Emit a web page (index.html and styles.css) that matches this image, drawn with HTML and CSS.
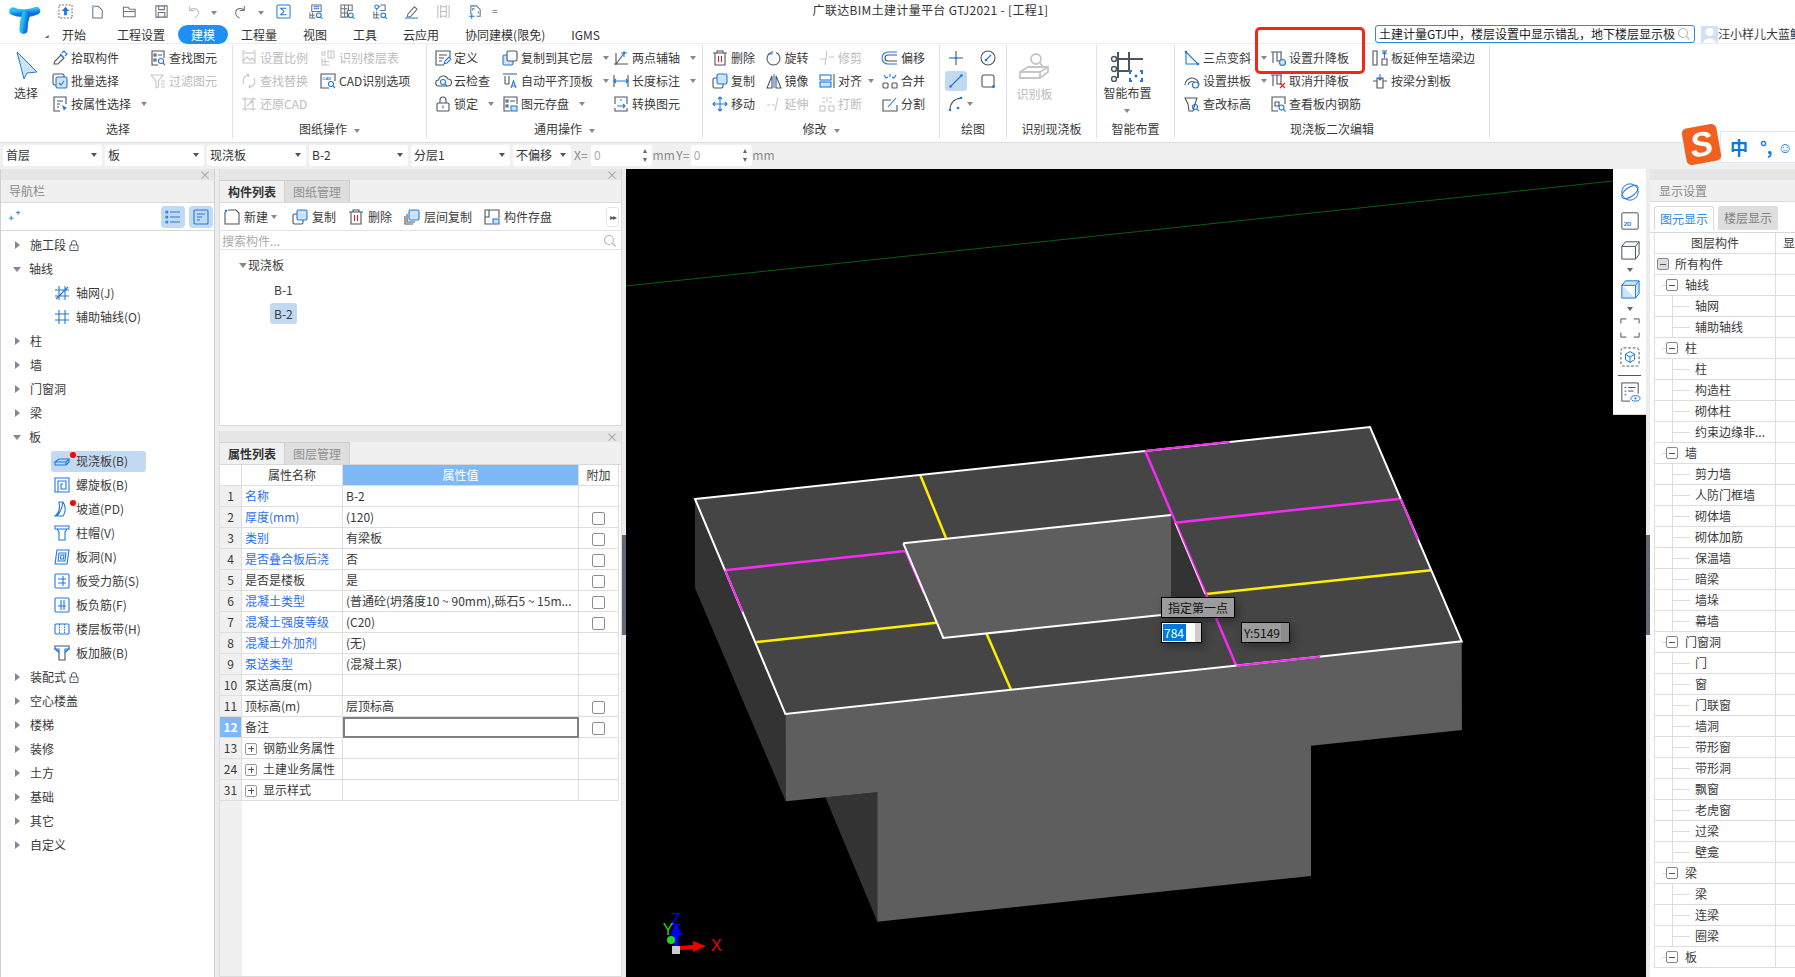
FILE: index.html
```html
<!DOCTYPE html>
<html lang="zh">
<head>
<meta charset="utf-8">
<title>广联达BIM土建计量平台 GTJ2021</title>
<link rel="stylesheet" href="styles.css">
</head>
<body>
<div class="app">

<header class="top">
  <div class="logo">
    <svg viewBox="0 0 40 34" class="logo-svg"><defs><linearGradient id="lg" x1="0" y1="0" x2="1" y2="1"><stop offset="0" stop-color="#22c3f0"/><stop offset="1" stop-color="#1668e3"/></linearGradient></defs><path d="M9.500 8C16 11 27 10 32 7.500" stroke="url(#lg)" stroke-width="7.500" stroke-linecap="round" fill="none"/><path d="M22 11C20 17 19.500 22 19.500 26" stroke="url(#lg)" stroke-width="8" stroke-linecap="round" fill="none"/><path d="M44 31l-4 3h4z" fill="#666"/></svg>
  </div>
  <div class="top-main">
    <div class="qrow">
      <svg class="qi" viewBox="0 0 16 16"><rect x="1" y="1" width="14" height="14" stroke-dasharray="2 1.5"/><path class="bfull" d="M8 3l4 4.500H9.500V12h-3V7.500H4z"/></svg>
      <svg class="qi" viewBox="0 0 16 16"><path d="M3 2.500h6l4 4V15H3z"/><circle class="bdot" cx="3.500" cy="2.500" r="1.800"/></svg>
      <svg class="qi" viewBox="0 0 16 16"><path d="M1.500 13.500V3.500h5l1.500 2h6v8z"/><path d="M1.500 8h12.500"/></svg>
      <svg class="qi" viewBox="0 0 16 16"><path d="M2 2h12v12H2z"/><path d="M5 2v4h6V2M4.500 14V9h7v5"/></svg>
      <svg class="qi qi-off" viewBox="0 0 16 16"><path d="M4 2v5h5M4 7c2-3 8-3 9 1s-2 6-4 7"/></svg><i class="car qcar"></i>
      <svg class="qi qi-next" viewBox="0 0 16 16"><path d="M12 2v5H7M12 7c-2-3-8-3-9 1s2 6 4 7"/></svg><i class="car qcar-d"></i>
      <svg class="qi qi-sum" viewBox="0 0 16 16"><rect class="b" x="1" y="1" width="14" height="14" rx="1.500"/><path class="b" d="M11 4.500H5l3.500 3.500L5 11.500h6"/></svg>
      <svg class="qi" viewBox="0 0 16 16"><path d="M4 1h10v7H4zM2 9v6h6M2 12h5M5 9v6"/><path class="b" d="M6 3h6M6 5h6"/><circle class="b" cx="11.500" cy="12" r="2.500"/><path class="b" d="M13.500 14l2 2"/></svg>
      <svg class="qi" viewBox="0 0 16 16"><path d="M1 1h12v6H8v7H1zM1 5h7M1 9.500h7M5 1v13M9 1v6"/><circle class="b" cx="11.500" cy="12" r="2.500"/><path class="b" d="M13.500 14l2 2"/></svg>
      <svg class="qi" viewBox="0 0 16 16"><path d="M9 1h5v6H9M2 8v7h6M2 11.500h6M5 8v7"/><circle class="b" cx="5" cy="3" r="2"/><path class="b" d="M5 5v2M7 3h2"/><circle class="b" cx="12" cy="12" r="2.500"/><path class="b" d="M14 14l2 2"/></svg>
      <svg class="qi" viewBox="0 0 16 16"><path d="M4 11l7-8 3 2.500-7 8H3.500z"/><path class="b" d="M1 15h14"/></svg>
      <svg class="qi qi-film" viewBox="0 0 16 16"><path d="M2 1v14M14 1v14M5 1v14M11 1v14M5 3h6M5 8h6M5 13h6"/></svg>
      <svg class="qi" viewBox="0 0 16 16"><path d="M3 11V2h6l4 4v7H9"/><path class="b" d="M1 13h6M4 10v6M7 5H5v2M11 10v-2"/></svg>
      <span class="qmenu">=</span>
      <span class="title">广联达BIM土建计量平台 GTJ2021 - [工程1]</span>
    </div>
    <div class="trow">
      <nav class="tabs">
        <span class="tab">开始</span>
        <span class="tab tab-gap">工程设置</span>
        <span class="tab tab-on">建模</span>
        <span class="tab">工程量</span>
        <span class="tab">视图</span>
        <span class="tab">工具</span>
        <span class="tab">云应用</span>
        <span class="tab">协同建模(限免)</span>
        <span class="tab">IGMS</span>
      </nav>
      <div class="search"><span class="search-t">土建计量GTJ中，楼层设置中显示错乱，地下楼层显示极</span><svg class="ic ic-gray" viewBox="0 0 16 16"><circle cx="7" cy="7" r="4.500"/><path d="M10.500 10.500l3 3"/></svg></div>
      <div class="avatar"><svg viewBox="0 0 17 17" class="av"><rect width="17" height="17" fill="#cfe2f8"/><circle cx="8.500" cy="6" r="4" fill="#fff"/><path d="M2 17c1-6 12-6 13 0z" fill="#fff"/></svg><span>汪小样儿大蓝鲸</span></div>
    </div>
  </div>
</header>

<section class="ribbon">
  <div class="rg g1">
    <div class="rb">
      <div class="lg lg-sel"><svg class="ic-lg" viewBox="0 0 24 28"><path class="bf" d="M3 1l20 20-10 1-3 6z"/></svg><span>选择</span></div>
      <div class="col c98">
        <div class="it"><svg class="ic" viewBox="0 0 16 16"><path d="M2 14l1-3 6-6 3 3-6 6z"/><path class="b" d="M8 4l4 4M10 3l2-2 3 3-2 2"/></svg><span>拾取构件</span></div>
        <div class="it"><svg class="ic" viewBox="0 0 16 16"><rect x="1" y="1" width="11" height="11" rx="1.500"/><rect class="bf" x="4" y="4" width="11" height="11" rx="1.500"/><path class="b" d="M7 10l2 2 3-4"/></svg><span>批量选择</span></div>
        <div class="it"><svg class="ic" viewBox="0 0 16 16"><path d="M8 15H2V1h12v7"/><path d="M5 5h6M5 8h3M5 11h2"/><path class="bfull" d="M10 9l5 3-2 1-1 2z"/></svg><span>按属性选择</span><i class="car"></i></div>
      </div>
      <div class="col">
        <div class="it"><svg class="ic" viewBox="0 0 16 16"><path d="M8 15H2V1h12v7"/><path d="M4 4h2v2H4zM8 5h4M4 9h2v2H4z"/><circle class="b" cx="11" cy="11" r="2.500"/><path class="b" d="M13 13l2 2"/></svg><span>查找图元</span></div>
        <div class="it off"><svg class="ic" viewBox="0 0 16 16"><path d="M1 2h12L8.500 8v6l-2.500 1V8zM11 8h4M11 11h4M11 14h4"/></svg><span>过滤图元</span></div>
      </div>
    </div>
    <div class="rt rt-sel">选择</div>
  </div>

  <div class="rg g2">
    <div class="rb">
      <div class="col c79 off">
        <div class="it"><svg class="ic" viewBox="0 0 16 16"><rect x="2" y="3" width="12" height="10"/><path d="M2 11l4-4 3 3 2-2 3 3M1 1h3M12 1h3"/></svg><span>设置比例</span></div>
        <div class="it"><svg class="ic" viewBox="0 0 16 16"><path d="M3 11A6 6 0 0 1 8 2M13 5a6 6 0 0 1-5 9M6 1l2 1-1 2M10 15l-2-1 1-2"/></svg><span>查找替换</span></div>
        <div class="it"><svg class="ic" viewBox="0 0 16 16"><path d="M1 3h14M1 13h14M4 1v14M12 1v14M6 10l5-5M9 5h2v2"/></svg><span>还原CAD</span></div>
      </div>
      <div class="col">
        <div class="it off"><svg class="ic" viewBox="0 0 16 16"><path d="M8 1h6v7H8zM11 1v7M2 8v7h7M2 11.500h7M5 8v7M2 2h3v3H2z"/></svg><span>识别楼层表</span></div>
        <div class="it"><svg class="ic" viewBox="0 0 16 16"><path d="M9 15H1V1h14v7"/><text class="cad" x="2.500" y="7">CAD</text><circle class="b" cx="11" cy="11" r="2.500"/><path class="b" d="M13 13l2 2"/></svg><span>CAD识别选项</span></div>
      </div>
    </div>
    <div class="rt">图纸操作<i class="car"></i></div>
  </div>

  <div class="rg g3">
    <div class="rb">
      <div class="col c67">
        <div class="it"><svg class="ic" viewBox="0 0 16 16"><path d="M9 15H1V1h14v6"/><path d="M4 5h8M4 8h5M4 11h3"/><path class="b" d="M9 14l1-3 4-4 2 2-4 4z"/></svg><span>定义</span></div>
        <div class="it"><svg class="ic" viewBox="0 0 16 16"><path d="M4 13a3 3 0 0 1-.5-6A5 5 0 0 1 13 6a3.500 3.500 0 0 1 0 7z"/><circle class="b" cx="8" cy="9" r="2.500"/><path class="b" d="M10 11l2 2"/></svg><span>云检查</span></div>
        <div class="it"><svg class="ic" viewBox="0 0 16 16"><path d="M5 7V4a3 3 0 0 1 6 0v3"/><rect x="2" y="7" width="12" height="8" rx="1"/><path class="bf" d="M8 9.500v3"/></svg><span>锁定</span><i class="car"></i></div>
      </div>
      <div class="col c111">
        <div class="it"><svg class="ic" viewBox="0 0 16 16"><rect class="bf" x="1" y="5" width="10" height="10" rx="1.500"/><rect x="5" y="1" width="10" height="10" rx="1.500" fill="#fff"/></svg><span>复制到其它层</span><i class="car"></i></div>
        <div class="it"><svg class="ic" viewBox="0 0 16 16"><path d="M1 1h14M3 3v8M7 3v8M3 11h4"/><path class="b" d="M9 15l2.500-7 2.500 7M10 13h3"/></svg><span>自动平齐顶板</span><i class="car"></i></div>
        <div class="it"><svg class="ic" viewBox="0 0 16 16"><path d="M8 15H2V1h13v7"/><path d="M4 4h2v2H4zM8 5h5M4 9h2v2H4z"/><rect class="bf" x="9" y="10" width="6" height="5"/></svg><span>图元存盘</span><i class="car"></i></div>
      </div>
      <div class="col">
        <div class="it"><svg class="ic" viewBox="0 0 16 16"><path d="M3 14L12 2M1 14h14M3 3v12"/><path class="b" d="M8 3h6M11 1v6"/></svg><span>两点辅轴</span><i class="car"></i></div>
        <div class="it"><svg class="ic" viewBox="0 0 16 16"><path d="M1 2v12M15 2v12"/><path class="b" d="M1 8h14M3 6l-2 2 2 2M13 6l2 2-2 2"/></svg><span>长度标注</span><i class="car"></i></div>
        <div class="it"><svg class="ic" viewBox="0 0 16 16"><path d="M2 8V1h12v7M2 12v3h12v-3"/><path class="b" d="M4 10h8M10 8l2 2-2 2M7 4h2"/></svg><span>转换图元</span></div>
      </div>
    </div>
    <div class="rt">通用操作<i class="car"></i></div>
  </div>

  <div class="rg g4">
    <div class="rb">
      <div class="col c53">
        <div class="it"><svg class="ic" viewBox="0 0 16 16"><path d="M1 3h14M5 3V1h6v2M3 3v12h10V3"/><path class="rd" d="M6.500 6v6M9.500 6v6"/></svg><span>删除</span></div>
        <div class="it"><svg class="ic" viewBox="0 0 16 16"><rect x="1" y="5" width="10" height="10" rx="1.500"/><rect class="bf" x="5" y="1" width="10" height="10" rx="1.500"/></svg><span>复制</span></div>
        <div class="it"><svg class="ic" viewBox="0 0 16 16"><path class="b" d="M8 1v14M1 8h14M6 3l2-2 2 2M6 13l2 2 2-2M3 6L1 8l2 2M13 6l2 2-2 2"/></svg><span>移动</span></div>
      </div>
      <div class="col c53">
        <div class="it"><svg class="ic" viewBox="0 0 16 16"><path d="M10 2.500a6.500 6.500 0 1 1-5 0"/><path class="b" d="M6 1v3H3"/></svg><span>旋转</span></div>
        <div class="it"><svg class="ic" viewBox="0 0 16 16"><path class="b" d="M8 1v14"/><path d="M6 3L1 15h5zM10 3l5 12h-5z"/></svg><span>镜像</span></div>
        <div class="it off"><svg class="ic" viewBox="0 0 16 16"><path d="M1 9h3M6 9h3M12 1L9 15"/></svg><span>延伸</span></div>
      </div>
      <div class="col c63">
        <div class="it off"><svg class="ic" viewBox="0 0 16 16"><path d="M1 9h6M10 7h5M8 1L6 15"/></svg><span>修剪</span></div>
        <div class="it"><svg class="ic" viewBox="0 0 16 16"><path d="M15 1v14"/><rect class="b" x="1" y="2" width="11" height="5"/><rect class="bf" x="1" y="9" width="11" height="5"/></svg><span>对齐</span><i class="car car-t"></i></div>
        <div class="it off"><svg class="ic" viewBox="0 0 16 16"><rect x="1" y="10" width="5" height="5"/><rect x="10" y="10" width="5" height="5"/><path d="M3 2h3M3 6h3M10 2h3M10 6h3M8 1v5"/></svg><span>打断</span></div>
      </div>
      <div class="col">
        <div class="it"><svg class="ic" viewBox="0 0 16 16"><path class="b" d="M15 2H6a6 6 0 0 0 0 12h9"/><path d="M15 5H6a3 3 0 0 0 0 6h9"/></svg><span>偏移</span></div>
        <div class="it"><svg class="ic" viewBox="0 0 16 16"><rect x="1" y="10" width="5" height="5" rx="1"/><rect x="10" y="10" width="5" height="5" rx="1"/><path class="b" d="M2 2l2 3 2-1M14 2l-2 3-2-1M8 1v3"/></svg><span>合并</span></div>
        <div class="it"><svg class="ic" viewBox="0 0 16 16"><path d="M15 9v6H1V4h8"/><path class="b" d="M6 11l8-9"/></svg><span>分割</span></div>
      </div>
    </div>
    <div class="rt">修改<i class="car"></i></div>
  </div>

  <div class="rg g5">
    <div class="rb">
      <div class="col c32">
        <div class="it"><svg class="ic" viewBox="0 0 16 16"><path d="M1 8h5M10 8h5M8 1v5M8 10v5"/><circle class="bfull" cx="8" cy="8" r="1.800"/></svg></div>
        <div class="it it-on"><svg class="ic" viewBox="0 0 16 16"><path class="b" d="M2 14L14 2"/><circle class="bfull" cx="2.500" cy="13.500" r="1.200"/><circle class="bfull" cx="13.500" cy="2.500" r="1.200"/></svg></div>
        <div class="it"><svg class="ic" viewBox="0 0 16 16"><path d="M2 14C2 7 6 3 13 2"/><circle class="bfull" cx="2" cy="14" r="1.300"/><circle class="bfull" cx="13" cy="2" r="1.300"/><circle class="bfull" cx="10" cy="12" r="1.300"/></svg><i class="car car-n"></i></div>
      </div>
      <div class="col">
        <div class="it"><svg class="ic" viewBox="0 0 16 16"><circle cx="8" cy="8" r="7"/><path class="b" d="M6 10l5-5"/><circle class="bfull" cx="6" cy="10" r="1.300"/></svg></div>
        <div class="it"><svg class="ic" viewBox="0 0 16 16"><rect x="2" y="2" width="12" height="12" rx="1.500"/><circle class="bfull" cx="13.500" cy="13.500" r="1.500"/></svg></div>
      </div>
    </div>
    <div class="rt">绘图</div>
  </div>

  <div class="rg g6">
    <div class="rb rb-id">
      <div class="lg off lg-id"><svg class="ic-lg2" viewBox="0 0 30 30"><circle cx="17" cy="7" r="5"/><path d="M21 11l3 4"/><path d="M1 20l8-5h20v5l-8 6H1zM1 20h20v6M21 20l8-5"/></svg><span>识别板</span></div>
    </div>
    <div class="rt">识别现浇板</div>
  </div>

  <div class="rg g7">
    <div class="rb rb-ai">
      <div class="lg lg-ai"><svg class="ic-lg3" viewBox="0 0 32 32"><path class="thick" d="M7 2v26M18 2v20M2 9h30M7 21h10"/><circle class="dot" cx="3" cy="9" r="2.500"/><circle class="dot" cx="3" cy="19" r="2.500"/><circle class="dot" cx="3" cy="29" r="2.500"/><path class="bthick" d="M21 21h-2v3M29 21h2v3M21 31h-2v-3M29 31h2v-3"/><circle class="bfull" cx="25" cy="26" r="1.500"/></svg><span>智能布置</span><i class="car car-ai"></i></div>
    </div>
    <div class="rt">智能布置</div>
  </div>

  <div class="rg g8">
    <div class="rb">
      <div class="col c86">
        <div class="it"><svg class="ic" viewBox="0 0 16 16"><path class="b" d="M2 2v12h12M2 2l12 12"/><circle class="bfull" cx="2" cy="2" r="1.300"/><circle class="bfull" cx="14" cy="14" r="1.300"/></svg><span>三点变斜</span><i class="car"></i></div>
        <div class="it"><svg class="ic" viewBox="0 0 16 16"><path d="M1 12a7 7 0 0 1 14 0M4 12a4 4 0 0 1 7-2"/><circle class="b" cx="11.500" cy="12" r="3"/></svg><span>设置拱板</span><i class="car"></i></div>
        <div class="it"><svg class="ic" viewBox="0 0 16 16"><path d="M1 2h12l-2 6-2 7H5L4 8z"/><circle class="b" cx="11" cy="11" r="2.500"/><path class="b" d="M13 13l2 2"/></svg><span>查改标高</span></div>
      </div>
      <div class="col c102">
        <div class="it"><svg class="ic" viewBox="0 0 16 16"><path d="M1 2h11M3 2v11M7 2v9h4V2"/><circle class="bf" cx="12.500" cy="12.500" r="3"/></svg><span>设置升降板</span></div>
        <div class="it"><svg class="ic" viewBox="0 0 16 16"><path d="M1 2h11M3 2v11M7 2v9h4V2"/><path class="rd" d="M10 10l5 5M15 10l-5 5"/></svg><span>取消升降板</span></div>
        <div class="it"><svg class="ic" viewBox="0 0 16 16"><path d="M8 15H2V1h13v7"/><path d="M5 6h4v4H5z"/><circle class="b" cx="11.500" cy="11.500" r="2.500"/><path class="b" d="M13.500 13.500l2 2"/></svg><span>查看板内钢筋</span></div>
      </div>
      <div class="col">
        <div class="it"><svg class="ic" viewBox="0 0 16 16"><path d="M1 1h4v14H1zM10 1h5M10 15h5V9h-5z"/><path class="b" d="M12.500 8V2M10.500 4l2-2 2 2"/></svg><span>板延伸至墙梁边</span></div>
        <div class="it"><svg class="ic" viewBox="0 0 16 16"><path d="M1 8h4M11 8h4M5 5h6v10H5z"/><path class="b" d="M8 1v6M6 5l2 2 2-2" /></svg><span>按梁分割板</span></div>
      </div>
    </div>
    <div class="rt">现浇板二次编辑</div>
  </div>
</section>

<section class="bar">
  <div class="combo"><span>首层</span><i class="car"></i></div>
  <div class="combo"><span>板</span><i class="car"></i></div>
  <div class="combo"><span>现浇板</span><i class="car"></i></div>
  <div class="combo"><span>B-2</span><i class="car"></i></div>
  <div class="combo"><span>分层1</span><i class="car"></i></div>
  <div class="combo combo-s"><span>不偏移</span><i class="car"></i></div>
  <span class="lbl">X=</span>
  <div class="num"><span>0</span><em class="spin"></em></div>
  <span class="lbl lbl-mm">mm</span>
  <span class="lbl lbl-y">Y=</span>
  <div class="num"><span>0</span><em class="spin"></em></div>
  <span class="lbl lbl-mm">mm</span>
</section>

<main class="main">
  <aside class="nav">
    <div class="band"><span class="x">×</span></div>
    <div class="phead">导航栏</div>
    <div class="ntool">
      <svg class="ic ic-sm" viewBox="0 0 16 16"><path class="b" d="M1 10h6M4 7v6M10 3h5M12.500 1v5"/></svg>
      <span class="ntool-btn ml-auto"><svg class="ic" viewBox="0 0 16 16"><path class="b" d="M5 3h10M5 8h10M5 13h10"/><circle class="b" cx="1.800" cy="3" r="1"/><circle class="b" cx="1.800" cy="8" r="1"/><circle class="b" cx="1.800" cy="13" r="1"/></svg></span>
      <span class="ntool-btn"><svg class="ic" viewBox="0 0 16 16"><rect class="b" x="1" y="1" width="14" height="14" rx="1"/><path class="b" d="M4 5h8M4 8h5M4 11h3"/></svg></span>
    </div>
    <div class="tree">
      <div class="nr"><i class="ar-r"></i>施工段<svg class="lock" viewBox="0 0 10 11"><path d="M2.500 5V3a2.500 2.500 0 0 1 5 0v2M1 5h8v5.500H1zM5 7v1.500"/></svg></div>
      <div class="nr"><i class="ar-d"></i>轴线</div>
      <div class="nc"><span class="ncin"><svg class="ic" viewBox="0 0 16 16"><path class="b" d="M1 5h14M1 11h14M5 1v14M11 1v14M2 14L14 2"/></svg>轴网(J)</span></div>
      <div class="nc"><span class="ncin"><svg class="ic" viewBox="0 0 16 16"><path class="b" d="M1 5h14M1 11h14M5 1v14M11 1v14"/></svg>辅助轴线(O)</span></div>
      <div class="nr"><i class="ar-r"></i>柱</div>
      <div class="nr"><i class="ar-r"></i>墙</div>
      <div class="nr"><i class="ar-r"></i>门窗洞</div>
      <div class="nr"><i class="ar-r"></i>梁</div>
      <div class="nr"><i class="ar-d"></i>板</div>
      <div class="nc"><span class="ncin nc-on"><svg class="ic" viewBox="0 0 16 16"><path class="b" d="M1 9l4-3h10l-3 3H1zM1 9v3h11V9M12 12l3-3V6"/></svg>现浇板(B)<i class="dot-r"></i></span></div>
      <div class="nc"><span class="ncin"><svg class="ic" viewBox="0 0 16 16"><path class="b" d="M1 1h14v14H1zM4 15V4h8v8H7V7h2"/></svg>螺旋板(B)</span></div>
      <div class="nc"><span class="ncin"><svg class="ic" viewBox="0 0 16 16"><path class="b" d="M5 1h4c3 4 3 10 0 14H1c4-3 5-9 4-14zM9 1c-1 6-3 11-6 14"/></svg>坡道(PD)<i class="dot-r"></i></span></div>
      <div class="nc"><span class="ncin"><svg class="ic" viewBox="0 0 16 16"><path class="b" d="M1 1h14v3H1zM3 4l2 3v8h6V7l2-3"/></svg>柱帽(V)</span></div>
      <div class="nc"><span class="ncin"><svg class="ic" viewBox="0 0 16 16"><path class="b" d="M3 1h12l-2 14H1zM5 4h7l-1 8H4zM7 6h3l-.5 4H6.500z"/></svg>板洞(N)</span></div>
      <div class="nc"><span class="ncin"><svg class="ic" viewBox="0 0 16 16"><rect class="b" x="1" y="1" width="14" height="14" rx="1"/><path class="b" d="M9 3v10M4 6h8M4 10h8"/></svg>板受力筋(S)</span></div>
      <div class="nc"><span class="ncin"><svg class="ic" viewBox="0 0 16 16"><rect class="b" x="1" y="1" width="14" height="14" rx="1"/><path class="b" d="M7 3v10M10 3v10M4 9h8"/></svg>板负筋(F)</span></div>
      <div class="nc"><span class="ncin"><svg class="ic" viewBox="0 0 16 16"><rect class="b" x="1" y="3" width="14" height="10" rx="1"/><path class="b" d="M5.500 3v10M10.500 3v10" stroke-dasharray="1.500 1"/></svg>楼层板带(H)</span></div>
      <div class="nc"><span class="ncin"><svg class="ic" viewBox="0 0 16 16"><path d="M1 1h14v3l-4 3v8H5V7L1 4z"/><path class="bf" d="M1 4l4 3V4zM15 4l-4 3V4z"/></svg>板加腋(B)</span></div>
      <div class="nr"><i class="ar-r"></i>装配式<svg class="lock" viewBox="0 0 10 11"><path d="M2.500 5V3a2.500 2.500 0 0 1 5 0v2M1 5h8v5.500H1zM5 7v1.500"/></svg></div>
      <div class="nr"><i class="ar-r"></i>空心楼盖</div>
      <div class="nr"><i class="ar-r"></i>楼梯</div>
      <div class="nr"><i class="ar-r"></i>装修</div>
      <div class="nr"><i class="ar-r"></i>土方</div>
      <div class="nr"><i class="ar-r"></i>基础</div>
      <div class="nr"><i class="ar-r"></i>其它</div>
      <div class="nr"><i class="ar-r"></i>自定义</div>
    </div>
  </aside>
  <div class="sp"></div>

  <section class="mid">
    <div class="panel p1">
      <div class="band"><span class="x">×</span></div>
      <div class="ptabs"><span class="ptab ptab-on">构件列表</span><span class="ptab">图纸管理</span></div>
      <div class="ctool">
        <span class="ct"><svg class="ic" viewBox="0 0 16 16"><path d="M1 3v12h14V4l-3-3H4"/><path class="b" d="M1 1l2 2M3 1L1 3" /></svg>新建<i class="car"></i></span>
        <span class="ct"><svg class="ic" viewBox="0 0 16 16"><rect x="1" y="5" width="10" height="10" rx="1.500"/><rect class="bf" x="5" y="1" width="10" height="10" rx="1.500"/></svg>复制</span>
        <span class="ct"><svg class="ic" viewBox="0 0 16 16"><path d="M1 3h14M5 3V1h6v2M3 3v12h10V3"/><path class="rd" d="M6.500 6v6M9.500 6v6"/></svg>删除</span>
        <span class="ct"><svg class="ic" viewBox="0 0 16 16"><path d="M1 7v8h8M3 5v8h8"/><rect class="bf" x="5" y="1" width="10" height="10" rx="1.500"/></svg>层间复制</span>
        <span class="ct"><svg class="ic" viewBox="0 0 16 16"><path d="M8 15H1V1h14v8M1 8h4V1"/><rect class="bf" x="9" y="10" width="6" height="5"/></svg>构件存盘</span>
        <span class="more">▸▸</span>
      </div>
      <div class="csearch"><span>搜索构件...</span><svg class="ic ic-gray" viewBox="0 0 16 16"><circle cx="7" cy="7" r="4.500"/><path d="M10.500 10.500l3 3"/></svg></div>
      <div class="ctree">
        <div class="ctr ctr0"><i class="ar-d"></i>现浇板</div>
        <div class="ctr ctr1"><span class="ctname">B-1</span></div>
        <div class="ctr ctr1"><span class="ctname ctname-on">B-2</span></div>
      </div>
    </div>
    <div class="panel p2">
      <div class="band"><span class="x">×</span></div>
      <div class="ptabs ptabs2"><span class="ptab ptab-on">属性列表</span><span class="ptab">图层管理</span></div>
      <div class="gridwrap">
        <table class="props">
          <colgroup><col class="c-n"><col class="c-k"><col class="c-v"><col class="c-a"></colgroup>
          <thead><tr><th class="h-n"></th><th>属性名称</th><th class="h-on">属性值</th><th>附加</th></tr></thead>
          <tbody>
            <tr><td class="n">1</td><td class="bl">名称</td><td>B-2</td><td></td></tr>
            <tr><td class="n">2</td><td class="bl">厚度(mm)</td><td>(120)</td><td><i class="cb"></i></td></tr>
            <tr><td class="n">3</td><td class="bl">类别</td><td>有梁板</td><td><i class="cb"></i></td></tr>
            <tr><td class="n">4</td><td class="bl">是否叠合板后浇</td><td>否</td><td><i class="cb"></i></td></tr>
            <tr><td class="n">5</td><td>是否是楼板</td><td>是</td><td><i class="cb"></i></td></tr>
            <tr><td class="n">6</td><td class="bl">混凝土类型</td><td>(普通砼(坍落度10 ~ 90mm),砾石5 ~ 15m...</td><td><i class="cb"></i></td></tr>
            <tr><td class="n">7</td><td class="bl">混凝土强度等级</td><td>(C20)</td><td><i class="cb"></i></td></tr>
            <tr><td class="n">8</td><td class="bl">混凝土外加剂</td><td>(无)</td><td></td></tr>
            <tr><td class="n">9</td><td class="bl">泵送类型</td><td>(混凝土泵)</td><td></td></tr>
            <tr><td class="n">10</td><td>泵送高度(m)</td><td></td><td></td></tr>
            <tr><td class="n">11</td><td>顶标高(m)</td><td>层顶标高</td><td><i class="cb"></i></td></tr>
            <tr><td class="n n-on">12</td><td>备注</td><td class="edit"></td><td><i class="cb"></i></td></tr>
            <tr><td class="n">13</td><td class="exp"><i class="pl"></i>钢筋业务属性</td><td></td><td></td></tr>
            <tr><td class="n">24</td><td class="exp"><i class="pl"></i>土建业务属性</td><td></td><td></td></tr>
            <tr><td class="n">31</td><td class="exp"><i class="pl"></i>显示样式</td><td></td><td></td></tr>
          </tbody>
        </table>
        <div class="gutter"></div>
      </div>
    </div>
  </section>
  <div class="sp"><div class="thumb"></div></div>

  <section class="view">
    <svg class="scene" viewBox="626 169 1020 808">
      <line x1="626" y1="286" x2="1613" y2="181" stroke="#0b5d12" stroke-width="1"/>
      <polygon points="695,499 785.400,714 785.700,801.300 695,588" fill="#333"/>
      <polygon points="825.400,797.300 877.300,792.300 877.300,921.700" fill="#333"/>
      <polygon points="785.400,714 1461.700,641.300 1461.900,730 1311,745.700 1311,876 877.300,921.700 877.300,792.300 785.700,801.300" fill="#5e5e5e"/>
      <polygon points="695,499 1370,427 1461.700,641.300 785.400,714" fill="#454545"/>
      <g stroke="#ffee00" stroke-width="2.500" fill="none">
        <line x1="920.300" y1="475.300" x2="946" y2="538"/>
        <line x1="986.700" y1="634" x2="1010.800" y2="689.300"/>
        <line x1="756.300" y1="642" x2="936.200" y2="622.700"/>
        <line x1="1206.100" y1="594" x2="1431" y2="570.300"/>
      </g>
      <g stroke="#f62bf0" stroke-width="2.500" fill="none">
        <line x1="725" y1="570.300" x2="905.500" y2="551"/>
        <line x1="905.500" y1="551" x2="924.100" y2="593.300"/>
        <line x1="1145.200" y1="451" x2="1236.300" y2="665.700"/>
        <line x1="1174.800" y1="522.700" x2="1400.800" y2="498.700"/>
      </g>
      <polygon points="1171,515 1210.500,610 1171,614" fill="#333"/>
      <polygon points="903.300,543.300 1171,515 1171,614 943.300,638" fill="#5e5e5e"/>
      <g stroke="#fff" stroke-width="2" fill="none">
        <polyline points="903.300,543.300 1171,515"/>
        <polyline points="903.300,543.300 943.300,638 1171,614"/>
      </g>
      <line x1="1175" y1="523" x2="1205" y2="594" stroke="#fff" stroke-width="1"/>
      <polygon points="695,499 1370,427 1461.700,641.300 785.400,714" fill="none" stroke="#fff" stroke-width="2"/>
      <g stroke="#f62bf0" stroke-width="2" fill="none">
        <line x1="725" y1="570.300" x2="742.600" y2="611.700"/>
        <line x1="1400.800" y1="498.700" x2="1417.800" y2="540"/>
        <line x1="1145" y1="451" x2="1229.700" y2="441.700"/>
        <line x1="1236.300" y1="665.700" x2="1320" y2="656.700"/>
      </g>
      <line x1="676" y1="946" x2="676" y2="930" stroke="#0000ff" stroke-width="5"/>
      <polygon points="676,923 670,935 682,935" fill="#0000ff"/>
      <circle cx="671" cy="940" r="4" fill="#1fd51f"/>
      <rect x="672" y="946" width="8" height="8" fill="#ccc"/>
      <line x1="680" y1="948" x2="695" y2="947" stroke="#ee0000" stroke-width="4"/>
      <polygon points="706,946 693,941 693,952" fill="#ee0000"/>
      <text x="676" y="925" class="ax ax-z">Z</text>
      <text x="668" y="935" class="ax ax-y">Y</text>
      <text x="711" y="951" class="ax ax-x">X</text>
    </svg>
    <div class="tip tip-main">指定第一点</div>
    <div class="tip tip-x"><span class="sel">784</span></div>
    <div class="tip tip-y">Y:5149</div>
    <div class="vbar">
      <svg class="vi" viewBox="0 0 22 22"><ellipse class="b" cx="11" cy="11" rx="9" ry="9"/><ellipse class="b" cx="11" cy="11" rx="10.500" ry="5" transform="rotate(-35 11 11)"/></svg>
      <svg class="vi" viewBox="0 0 22 22"><rect x="2" y="2" width="18" height="18" rx="1"/><text class="t2d" x="4" y="17">2D</text></svg>
      <svg class="vi" viewBox="0 0 22 22"><path d="M2 7v14h15V7zM2 7l4-5h15v14l-4 5M17 7l4-5"/></svg>
      <i class="vcar"></i>
      <svg class="vi" viewBox="0 0 22 22"><path class="bf" d="M2 7v14h15V7zM2 7l4-5h15v14l-4 5M17 7l4-5"/></svg>
      <i class="vcar"></i>
      <svg class="vi" viewBox="0 0 22 22"><path d="M1 6V1h6M15 1h6v5M21 16v5h-6M7 21H1v-5"/></svg>
      <svg class="vi" viewBox="0 0 22 22"><rect x="1" y="1" width="20" height="20" rx="3" stroke-dasharray="3 2"/><path class="b" d="M11 5l5 3v6l-5 3-5-3V8zM6 8l5 3 5-3M11 11v6"/></svg>
      <div class="vsep"></div>
      <svg class="vi" viewBox="0 0 22 22"><path d="M11 21H2V1h18v12"/><path d="M5 6h2M9 6h8M5 10h2M9 10h6M5 14h2"/><ellipse class="b" cx="17" cy="18" rx="5" ry="3"/><circle class="bfull" cx="17" cy="18" r="1.200"/></svg>
    </div>
  </section>
  <div class="sp"><div class="thumb"></div></div>

  <aside class="right">
    <div class="band"></div>
    <div class="phead">显示设置</div>
    <div class="rtabs"><span class="rtab rtab-on">图元显示</span><span class="rtab">楼层显示</span></div>
    <div class="rtable">
      <div class="rr rh"><div class="rc1">图层构件</div><div class="rc2">显示</div></div>
      <div class="rr l0"><div class="rc1"><i class="mn mn0"></i>所有构件</div><div class="rc2"></div></div>
      <div class="rr l1"><div class="rc1"><i class="mn"></i>轴线</div><div class="rc2"></div></div>
      <div class="rr l2"><div class="rc1">轴网</div><div class="rc2"></div></div>
      <div class="rr l2"><div class="rc1">辅助轴线</div><div class="rc2"></div></div>
      <div class="rr l1"><div class="rc1"><i class="mn"></i>柱</div><div class="rc2"></div></div>
      <div class="rr l2"><div class="rc1">柱</div><div class="rc2"></div></div>
      <div class="rr l2"><div class="rc1">构造柱</div><div class="rc2"></div></div>
      <div class="rr l2"><div class="rc1">砌体柱</div><div class="rc2"></div></div>
      <div class="rr l2"><div class="rc1">约束边缘非...</div><div class="rc2"></div></div>
      <div class="rr l1"><div class="rc1"><i class="mn"></i>墙</div><div class="rc2"></div></div>
      <div class="rr l2"><div class="rc1">剪力墙</div><div class="rc2"></div></div>
      <div class="rr l2"><div class="rc1">人防门框墙</div><div class="rc2"></div></div>
      <div class="rr l2"><div class="rc1">砌体墙</div><div class="rc2"></div></div>
      <div class="rr l2"><div class="rc1">砌体加筋</div><div class="rc2"></div></div>
      <div class="rr l2"><div class="rc1">保温墙</div><div class="rc2"></div></div>
      <div class="rr l2"><div class="rc1">暗梁</div><div class="rc2"></div></div>
      <div class="rr l2"><div class="rc1">墙垛</div><div class="rc2"></div></div>
      <div class="rr l2"><div class="rc1">幕墙</div><div class="rc2"></div></div>
      <div class="rr l1"><div class="rc1"><i class="mn"></i>门窗洞</div><div class="rc2"></div></div>
      <div class="rr l2"><div class="rc1">门</div><div class="rc2"></div></div>
      <div class="rr l2"><div class="rc1">窗</div><div class="rc2"></div></div>
      <div class="rr l2"><div class="rc1">门联窗</div><div class="rc2"></div></div>
      <div class="rr l2"><div class="rc1">墙洞</div><div class="rc2"></div></div>
      <div class="rr l2"><div class="rc1">带形窗</div><div class="rc2"></div></div>
      <div class="rr l2"><div class="rc1">带形洞</div><div class="rc2"></div></div>
      <div class="rr l2"><div class="rc1">飘窗</div><div class="rc2"></div></div>
      <div class="rr l2"><div class="rc1">老虎窗</div><div class="rc2"></div></div>
      <div class="rr l2"><div class="rc1">过梁</div><div class="rc2"></div></div>
      <div class="rr l2"><div class="rc1">壁龛</div><div class="rc2"></div></div>
      <div class="rr l1"><div class="rc1"><i class="mn"></i>梁</div><div class="rc2"></div></div>
      <div class="rr l2"><div class="rc1">梁</div><div class="rc2"></div></div>
      <div class="rr l2"><div class="rc1">连梁</div><div class="rc2"></div></div>
      <div class="rr l2"><div class="rc1">圈梁</div><div class="rc2"></div></div>
      <div class="rr l1"><div class="rc1"><i class="mn"></i>板</div><div class="rc2"></div></div>
    </div>
  </aside>
</main>

<div class="redbox"></div>
<div class="ime"><span class="ime-s">S</span><span class="ime-zh">中</span><span class="ime-p">°,</span><span class="ime-c">☺</span></div>
</div>
</body>
</html>
```
FILE: styles.css
```css
* { box-sizing: border-box; }
html, body { margin: 0; padding: 0; }
body { width: 1795px; height: 977px; overflow: hidden; background: #f0f0f0; color: #3a3a3a; font: 12px/16px "Noto Sans CJK SC", "Noto Sans", sans-serif; }
i, em { font-style: normal; }
.app { position: relative; width: 1795px; height: 977px; display: flex; flex-direction: column; }

/* top */
.top { height: 44px; background: #fff; display: flex; flex: none; border-bottom: 1px solid #ececec; }
.logo { width: 49px; flex: none; padding: 3px 0 0 3px; }
.logo-svg { width: 42px; height: 35px; overflow: visible; display: block; }
.top-main { flex: 1; display: flex; flex-direction: column; min-width: 0; }
.qrow { height: 25px; display: flex; align-items: center; padding-left: 9px; }
.qi { width: 15px; height: 15px; margin-right: 17px; fill: none; stroke: #68717c; stroke-width: 1.100; flex: none; margin-top: -3px; overflow: visible; }
.qi-off { stroke: #bdbdbd; margin-right: 3px; }
.qi-next { margin-left: 0; margin-right: 3px; }
.qi-sum { margin-left: 12px; }
.qi-film { stroke: #bdbdbd; }
.qcar { margin: 0 16px 0 0; border-top-color: #c4c4c4; }
.qcar-d { margin: 0; border-top-color: #555; }
.qmenu { color: #777; margin-top: -4px; margin-left: -8px; font-size: 10px; }
.title { margin-left: 315px; white-space: nowrap; color: #333; margin-top: -6px; letter-spacing: .33px; }
.trow { height: 18px; display: flex; align-items: center; }
.tabs { display: flex; flex: none; width: 1326px; }
.tab { padding: 0 13px; height: 19px; line-height: 19px; white-space: nowrap; color: #333; }
.tab-gap { margin-left: 5px; }
.tab-on { background: #1e90f5; color: #fff; border-radius: 10px; }
.search { width: 320px; height: 18px; border: 1px solid #2b8be6; border-radius: 3px; display: flex; align-items: center; justify-content: space-between; padding: 0 2px 0 3px; flex: none; overflow: hidden; }
.search-t { white-space: nowrap; overflow: hidden; width: 297px; color: #222; }
.avatar { display: flex; align-items: center; margin-left: 6px; white-space: nowrap; flex: none; }
.av { width: 17px; height: 17px; flex: none; }

/* shared icon */
.ic { width: 16px; height: 16px; flex: none; fill: none; stroke: #4a5561; stroke-width: 1.100; overflow: visible; }
.ic-gray { stroke: #b5b5b5; }
.ic-sm { width: 13px; height: 13px; }
.b { stroke: #1f78e0; fill: none; }
.bf { stroke: #1f78e0; fill: #cfe3f8; }
.bfull { fill: #1f78e0; stroke: none; }
.bdot { fill: #9ac6ef; stroke: none; }
.rd { stroke: #e02020; fill: none; }
.cad { font: 700 4px "Liberation Sans", sans-serif; fill: #1f78e0; stroke: none; }
.off { color: #bcbcbc; }
.off .ic, .off .ic-lg2 { stroke: #c6c6c6; }
.car { display: inline-block; width: 0; height: 0; border-left: 3px solid transparent; border-right: 3px solid transparent; border-top: 4px solid #888; margin-left: 7px; vertical-align: middle; flex: none; }
.car-n { margin-left: 0; }
.car-t { margin-left: 3px; }

/* ribbon */
.ribbon { height: 99px; flex: none; background: #fff; display: flex; border-bottom: 1px solid #dcdcdc; padding-top: 1px; }
.rg { height: 93px; border-right: 1px solid #e0e0e0; display: flex; flex-direction: column; flex: none; }
.g1 { width: 233px; }
.g2 { width: 194px; }
.g3 { width: 276px; }
.g4 { width: 237px; }
.g5 { width: 67px; }
.g6 { width: 90px; }
.g7 { width: 78px; }
.g8 { width: 315px; }
.rb { height: 74px; display: flex; padding-top: 1.500px; flex: none; }
.rb-id { justify-content: center; padding-right: 34px; }
.rb-ai { justify-content: center; padding-right: 16px; }
.g2 .rb { padding-left: 8px; }
.g3 .rb { padding-left: 8px; }
.g4 .rb { padding-left: 9px; }
.g5 .rb { padding-left: 8px; }
.g8 .rb { padding-left: 9px; }
.rt { height: 19px; line-height: 19px; text-align: center; white-space: nowrap; color: #3a3a3a; }
.rt-sel { padding-left: 4px; }
.col { display: flex; flex-direction: column; flex: none; }
.c32 { width: 32px; }
.c53 { width: 53.500px; }
.c63 { width: 63px; }
.c67 { width: 67px; }
.c79 { width: 79px; }
.c86 { width: 86px; }
.c98 { width: 98px; }
.c102 { width: 102px; }
.c111 { width: 111px; }
.it { height: 23px; display: flex; align-items: center; gap: 3px; white-space: nowrap; }
.it-on { width: 22px; margin-left: -3px; padding-left: 3px; height: 20px; margin-top: 1.500px; margin-bottom: 1.500px; background: #c2d9f2; border-radius: 3px; }
.lg { display: flex; flex-direction: column; align-items: center; white-space: nowrap; }
.lg-sel { width: 52px; padding-top: 4px; gap: 6px; }
.ic-lg { width: 24px; height: 28px; overflow: visible; }
.ic-lg2 { width: 30px; height: 30px; fill: none; stroke-width: 1.800; }
.lg-id { padding-top: 5px; gap: 4px; }
.lg-ai { padding-top: 3px; gap: 3px; }
.ic-lg3 { width: 32px; height: 32px; fill: none; }
.thick { stroke: #4a5561; stroke-width: 2; }
.bthick { stroke: #1f78e0; stroke-width: 2; fill: none; }
.dot { stroke: #4a5561; stroke-width: 1.500; fill: #fff; }
.car-ai { margin: 5px 0 0 0; }

/* option bar */
.bar { height: 26px; flex: none; display: flex; align-items: center; padding: 0 0 2px 3px; gap: 3.500px; background: #f0f0f0; color: #333; }
.combo { width: 98.500px; height: 21px; background: #fff; border-radius: 3px; display: flex; align-items: center; justify-content: space-between; padding: 0 5px 0 3px; flex: none; }
.combo-s { width: 57.500px; }
.combo .car { margin-left: 0; border-top-color: #555; }
.lbl { color: #8a8a8a; flex: none; }
.lbl-mm { margin-left: -3px; }
.lbl-y { margin-left: -2px; margin-right: -2px; }
.num { width: 61px; height: 21px; background: #fff; border-radius: 3px; padding-left: 3px; color: #aaa; display: flex; align-items: center; justify-content: space-between; padding-right: 4px; }
.spin { width: 5px; height: 13px; display: flex; flex-direction: column; justify-content: space-between; }
.spin::before { content: ""; width: 0; height: 0; border-left: 2.500px solid transparent; border-right: 2.500px solid transparent; border-bottom: 4px solid #666; }
.spin::after { content: ""; width: 0; height: 0; border-left: 2.500px solid transparent; border-right: 2.500px solid transparent; border-top: 4px solid #666; }

/* main */
.main { flex: 1; display: flex; min-height: 0; }
.sp { width: 4px; flex: none; background: #ececec; padding-top: 366px; }
.thumb { height: 100px; background: #5f6a76; }
.band { height: 11px; background: #e6e6e6; position: relative; flex: none; }
.x { display: block; text-align: right; padding-right: 3px; line-height: 11px; font-size: 12px; color: #a4a4a4; }

/* nav */
.nav { width: 215px; flex: none; display: flex; flex-direction: column; background: #fff; border-left: 1px solid #d0d0d0; border-right: 1px solid #d0d0d0; }
.phead { height: 23px; flex: none; background: #f0f0f0; border-bottom: 1px solid #dadada; color: #8a8a8a; padding-left: 8px; line-height: 22px; }
.ntool { height: 28px; flex: none; display: flex; align-items: center; padding: 0 1px 0 7px; gap: 4px; border-bottom: 1px solid #dadada; }
.ntool-btn { width: 24px; height: 22px; background: #c2d9f2; border-radius: 4px; display: flex; align-items: center; justify-content: center; }
.ml-auto { margin-left: auto; }
.tree { padding-top: 2px; flex: 1; }
.nr, .nc { height: 24px; display: flex; align-items: center; white-space: nowrap; }
.ar-r { width: 0; height: 0; border-top: 4px solid transparent; border-bottom: 4px solid transparent; border-left: 5px solid #888; margin: 0 10px 0 14px; flex: none; }
.ar-d { width: 0; height: 0; border-left: 4px solid transparent; border-right: 4px solid transparent; border-top: 5px solid #888; margin: 0 8px 0 12px; flex: none; }
.lock { width: 10px; height: 11px; margin-left: 3px; fill: none; stroke: #55606c; stroke-width: 1; }
.nc { padding-left: 50px; }
.ncin { position: relative; display: flex; align-items: center; height: 21px; gap: 6px; padding: 0 18px 0 3px; border-radius: 3px; }
.nc-on { background: #c2d9f2; }
.dot-r { position: absolute; left: 19px; top: 1px; width: 6px; height: 6px; border-radius: 50%; background: #f00; }

/* middle */
.mid { width: 403px; flex: none; display: flex; flex-direction: column; gap: 5px; }
.panel { background: #fff; display: flex; flex-direction: column; border: 1px solid #dcdcdc; border-top: 0; }
.p1 { height: 257px; flex: none; }
.p2 { flex: 1; min-height: 0; }
.ptabs { height: 23px; flex: none; display: flex; background: #f0f0f0; border-bottom: 1px solid #d8d8d8; }
.ptab { width: 65px; text-align: center; line-height: 22px; background: #dedede; color: #909090; border: 1px solid #cfcfcf; border-bottom: 0; border-left: 0; }
.ptab-on { background: #f0f0f0; color: #333; font-weight: 700; }
.ctool { height: 28px; flex: none; display: flex; align-items: center; padding: 1px 0 0 4px; border-bottom: 1px solid #e2e2e2; }
.ct { display: flex; align-items: center; gap: 4px; white-space: nowrap; margin-right: 12px; }
.ct .car { margin-left: -1px; margin-right: 3px; }
.more { width: 13px; height: 20px; border: 1px solid #e6e6e6; border-radius: 3px; font-size: 8px; line-height: 18px; text-align: center; color: #555; margin-left: auto; margin-right: 2px; overflow: hidden; letter-spacing: -1px; }
.csearch { height: 19px; flex: none; display: flex; align-items: center; justify-content: space-between; border-bottom: 1px solid #e2e2e2; padding: 1px 3px 0 2px; color: #aaa; }
.ctree { flex: 1; padding-top: 3px; }
.ctr { height: 24px; display: flex; align-items: center; }
.ctr0 { padding-left: 7px; }
.ctr0 .ar-d { margin-right: 1px; }
.ctr1 { padding-left: 50px; }
.ctname { display: block; padding: 0 4px; height: 21px; line-height: 21px; border-radius: 3px; width: 27px; white-space: nowrap; }
.ctname-on { background: #c2d9f2; }

/* props table */
.gridwrap { flex: 1; display: flex; flex-direction: column; min-height: 0; }
.props { table-layout: fixed; border-collapse: separate; border-spacing: 0; width: 399px; flex: none; }
.c-n { width: 22px; }
.c-k { width: 101px; }
.c-v { width: 236px; }
.c-a { width: 40px; }
.props th, .props td { height: 21px; padding: 0 0 0 3px; border-right: 1px solid #dedede; border-bottom: 1px solid #dedede; font-weight: 400; white-space: nowrap; overflow: hidden; background: #fff; line-height: 16px; }
.props th { text-align: center; padding: 0; }
.props .h-on { background: #7eb8f7; color: #fff; }
.props .h-n { background: #fff; }
.props td.n { background: #f0f0f0; text-align: center; padding: 0; }
.props td.n-on { background: #7eb8f7; color: #fff; font-weight: 700; }
.props td.bl { color: #2a6ff0; }
.props td.edit { border: 2px solid #808080; background: #fff; }
.props td:last-child { text-align: center; padding: 0; }
.cb { display: inline-block; width: 13px; height: 13px; border: 1px solid #8e8e8e; border-radius: 2px; vertical-align: middle; }
.pl { display: inline-block; position: relative; width: 12px; height: 12px; border: 1px solid #999; border-radius: 2px; margin-right: 6px; vertical-align: -2px; }
.pl::before { content: ""; position: absolute; left: 2px; top: 4px; width: 6px; height: 1px; background: #555; }
.pl::after { content: ""; position: absolute; left: 4.500px; top: 2px; width: 1px; height: 6px; background: #555; }
.gutter { width: 22px; flex: 1; background: #f0f0f0; }

/* view */
.view { width: 1020px; flex: none; position: relative; background: #000; overflow: hidden; }
.scene { width: 1020px; height: 808px; display: block; }
.ax { font: 16px "Liberation Sans", sans-serif; }
.ax-z { fill: #0000ff; text-anchor: middle; }
.ax-y { fill: #1fd51f; text-anchor: middle; }
.ax-x { fill: #ee0000; }
.tip { position: absolute; background: #9c9c9c; border: 1px solid #000; color: #111; white-space: nowrap; line-height: 19px; box-shadow: 3px 4px 8px rgba(0, 0, 0, .3); }
.tip-main { left: 535px; top: 428px; width: 74px; height: 21px; text-align: center; }
.tip-x { left: 535px; top: 453px; width: 41px; height: 21px; background: linear-gradient(90deg, #fff 0 85%, #ccc 85%); padding: 1px; }
.sel { display: block; width: 23px; height: 17px; line-height: 17px; background: #0078d7; color: #fff; padding-left: 1px; }
.tip-y { left: 615px; top: 453px; width: 49px; height: 21px; padding-left: 2px; background: linear-gradient(90deg, #9c9c9c 0 84%, #8b8b8b 84%); }
.vbar { position: absolute; right: 0; top: 0; width: 33px; height: 246px; background: #fff; display: flex; flex-direction: column; align-items: center; padding-top: 13px; border-bottom: 1px solid #d8d8d8; }
.vi { width: 20px; height: 20px; flex: none; fill: none; stroke: #4a5561; stroke-width: 1.100; margin-bottom: 9px; overflow: visible; }
.t2d { font: 700 6.500px "Liberation Sans", sans-serif; fill: #1f78e0; stroke: none; }
.vcar { width: 0; height: 0; border-left: 3.500px solid transparent; border-right: 3.500px solid transparent; border-top: 4px solid #666; margin: -1px 0 7px; flex: none; }
.vsep { width: 23px; height: 1px; background: #555; margin: -1px 0 6px; flex: none; }

/* right */
.right { width: 145px; flex: none; background: #f0f0f0; display: flex; flex-direction: column; overflow: hidden; }
.right .phead { height: 22px; border-bottom: 1px solid #dadada; padding-left: 9px; }
.rtabs { height: 31px; flex: none; display: flex; align-items: flex-end; gap: 4px; padding: 0 0 2px 4px; background: #fff; border-bottom: 1px solid #d8d8d8; }
.rtab { width: 60px; height: 24px; line-height: 24px; text-align: center; background: #dedede; color: #808080; border-radius: 3px 3px 0 0; }
.rtab-on { background: #fff; color: #2b8be6; border: 1px solid #d8d8d8; border-bottom: 0; }
.rtable { flex: 1; background: #fff; padding-left: 4px; overflow: hidden; }
.rr { height: 21px; display: flex; border-bottom: 1px solid #dedede; white-space: nowrap; position: relative; }
.rc1 { width: 122px; flex: none; border-left: 1px solid #dedede; border-right: 1px solid #dedede; display: flex; align-items: center; }
.rc2 { flex: 1; padding-left: 7px; overflow: hidden; line-height: 20px; }
.rh .rc1 { justify-content: center; }
.l0 .rc1 { padding-left: 2px; }
.l1 .rc1 { padding-left: 11px; }
.l2 .rc1 { padding-left: 40px; }
.mn { position: relative; width: 12px; height: 12px; border: 1px solid #888; border-radius: 2px; flex: none; margin-right: 7px; }
.mn::after { content: ""; position: absolute; left: 2px; top: 4.500px; width: 6px; height: 1px; background: #555; }
.mn0 { background: #dcdcdc; margin-right: 6px; }
.l1 .rc1::before { content: ""; position: absolute; left: 8px; top: 10px; width: 4px; height: 1px; background: #ddd; }
.l2 .rc1::before { content: ""; position: absolute; left: 18px; top: 0; width: 1px; height: 21px; background: #ddd; }
.l2 .rc1::after { content: ""; position: absolute; left: 18px; top: 10px; width: 18px; height: 1px; background: #ddd; }

/* overlays */
.redbox { position: absolute; left: 1255px; top: 27px; width: 110px; height: 47px; border: 3.500px solid #f5261a; border-radius: 5px; }
.ime { position: absolute; left: 1720px; top: 131px; width: 75px; height: 32px; background: #fff; border: 1px solid #dce8f5; border-right: 0; display: flex; align-items: center; color: #0a78d8; }
.ime-s { position: absolute; left: -37px; top: -6px; width: 35px; height: 37px; background: #f0601f; border-radius: 5px; transform: rotate(-10deg); color: #fff; font: italic 700 34px/37px "Liberation Sans", sans-serif; text-align: center; }
.ime-zh { margin-left: 9px; font-size: 18px; font-weight: 700; }
.ime-p { margin-left: 12px; font-size: 17px; font-weight: 700; }
.ime-c { margin-left: 5px; font-size: 15px; }
```
